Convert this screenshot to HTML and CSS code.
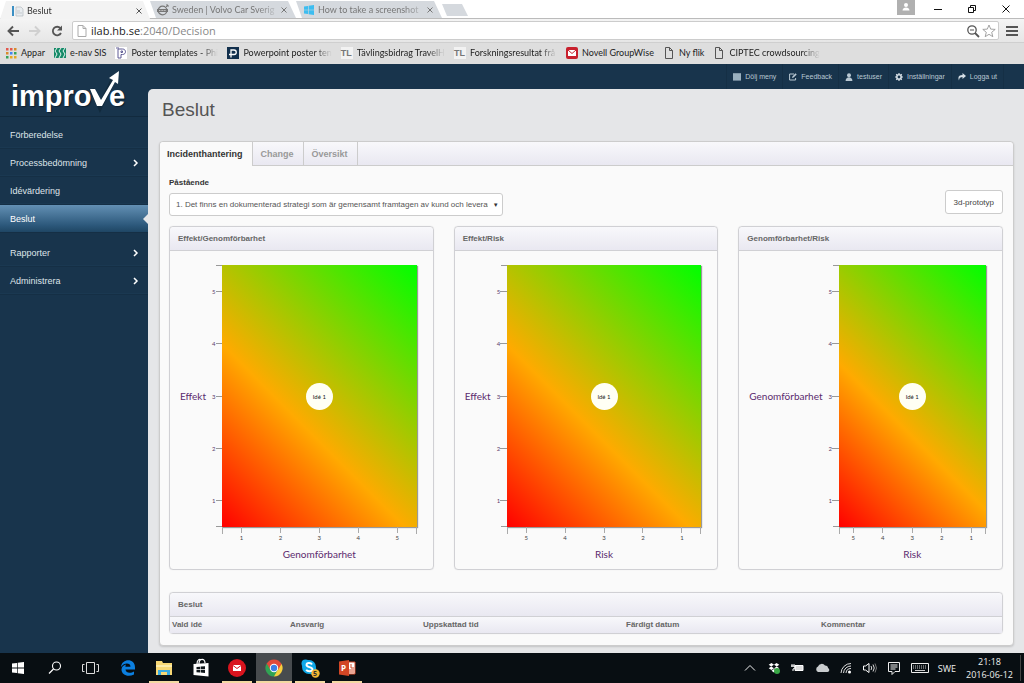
FILE: index.html
```html
<!DOCTYPE html>
<html lang="sv">
<head>
    <meta charset="UTF-8">
    <meta name="viewport" content="width=device-width, initial-scale=1.0">
    <title>Beslut</title>
    <link rel="stylesheet" href="styles.css">
</head>
<body>
    <!-- Browser tabs -->
    <div class="tab-strip">
        <div class="browser-tab active">
            <svg class="favicon" viewBox="0 0 12 12"><path d="M0 1h2v10H0z" fill="#3b8fc4"/><path d="M4 2h5l2 2v7H4z" fill="#e8ecef" stroke="#b5bcc2" stroke-width=".7"/><path d="M5 8h5M5 6h3" stroke="#b5bcc2" stroke-width=".7"/></svg>
            <span class="tab-title">Beslut</span>
            <button class="tab-close" aria-label="Stäng"><svg viewBox="0 0 6 6"><path d="M.5.5l5 5M5.500.5l-5 5" stroke="#555"/></svg></button>
        </div>
        <div class="browser-tab">
            <svg class="favicon" viewBox="0 0 12 12"><circle cx="5.500" cy="6.500" r="4.300" fill="none" stroke="#777" stroke-width="1.200"/><path d="M8.500 3.500L11 1M9 1h2v2" fill="none" stroke="#777"/><path d="M0 5h11v3H0z" fill="#777"/><path d="M2 6.500h7" stroke="#ddd" stroke-width=".8" stroke-dasharray="1 .6"/></svg>
            <span class="tab-title">Sweden | Volvo Car Sverig</span>
            <button class="tab-close" aria-label="Stäng"><svg viewBox="0 0 6 6"><path d="M.5.5l5 5M5.500.5l-5 5" stroke="#777"/></svg></button>
        </div>
        <div class="browser-tab">
            <svg class="favicon" viewBox="0 0 12 12"><path d="M1 2.500l4-.6v3.800H1zM5.600 1.800L11 1v4.700H5.600zM1 6.300h4v3.800l-4-.6zM5.600 6.300H11V11l-5.400-.8z" fill="#3dbdf0"/></svg>
            <span class="tab-title">How to take a screenshot</span>
            <button class="tab-close" aria-label="Stäng"><svg viewBox="0 0 6 6"><path d="M.5.5l5 5M5.500.5l-5 5" stroke="#777"/></svg></button>
        </div>
        <button class="new-tab" aria-label="Ny flik"></button>
        <div class="window-buttons">
            <span class="profile-badge"><svg viewBox="0 0 18 15"><circle cx="9" cy="5" r="2" fill="#fff"/><path d="M5.500 10.500c0-4 7-4 7 0z" fill="#fff"/></svg></span>
            <svg class="window-icon" viewBox="0 0 10 10"><path d="M1 5.500h8" stroke="#111"/></svg>
            <svg class="window-icon" viewBox="0 0 10 10"><path d="M1.500 3.500h5v5h-5zM3.500 3V1.500h5v5H7" fill="none" stroke="#111"/></svg>
            <svg class="window-icon" viewBox="0 0 10 10"><path d="M1.500 1.500l7 7M8.500 1.500l-7 7" stroke="#111"/></svg>
        </div>
    </div>

    <!-- Address bar -->
    <div class="toolbar">
        <svg class="tool-icon" viewBox="0 0 14 14"><path d="M13 7H3M7 2.500L2.500 7 7 11.500" fill="none" stroke="#555" stroke-width="1.900"/></svg>
        <svg class="tool-icon" viewBox="0 0 14 14"><path d="M1 7h10M7 2.500L11.500 7 7 11.500" fill="none" stroke="#d0d0d0" stroke-width="1.900"/></svg>
        <svg class="tool-icon" viewBox="0 0 14 14"><path d="M11 9a4.300 4.300 0 1 1-.6-4.800" fill="none" stroke="#555" stroke-width="1.800"/><path d="M12 1.500V6.500H7z" fill="#555"/></svg>
        <div class="address">
            <svg class="page-icon" viewBox="0 0 12 12"><path d="M2 .5h5l3 3v8H2zM7 .5v3h3" fill="none" stroke="#aaa"/></svg>
            <span class="url"><b>ilab.hb.se</b>:2040/Decision</span>
            <svg class="address-icon" viewBox="0 0 14 14"><circle cx="6" cy="6" r="4.200" fill="none" stroke="#555" stroke-width="1.300"/><path d="M4 6h4" stroke="#555"/><path d="M9 9l4 4" stroke="#555" stroke-width="1.800"/></svg>
            <svg class="address-icon" viewBox="0 0 14 14"><path d="M7 1l1.700 4.100 4.500.3-3.500 2.900 1.100 4.400L7 10.300l-3.800 2.400 1.100-4.400L.8 5.400l4.500-.3z" fill="none" stroke="#999" stroke-width=".9"/></svg>
        </div>
        <svg class="menu-icon" viewBox="0 0 12 12"><path d="M0 2h12M0 6h12M0 10h12" stroke="#555" stroke-width="2"/></svg>
    </div>

    <!-- Bookmarks -->
    <nav class="bookmarks">
        <a href="#"><svg viewBox="0 0 12 12"><path d="M1 1h2.500v2.500H1zM5 1h2.500v2.500H5z" fill="#e2574c"/><path d="M9 1h2.500v2.500H9zM1 5h2.500v2.500H1z" fill="#d98a2b"/><path d="M5 5h2.500v2.500H5z" fill="#4285f4"/><path d="M9 5h2.500v2.500H9zM1 9h2.500v2.500H1z" fill="#37a45a"/><path d="M5 9h2.500v2.500H5zM9 9h2.500v2.500H9z" fill="#e5a823"/></svg><span>Appar</span></a>
        <a href="#"><svg viewBox="0 0 12 12"><path d="M0 1h12v10H0z" fill="#168a68"/><path d="M3 1L1 4l2 3-2 4M7 1L5 4l2 3-2 4M11 1L9 4l2 3-2 4" fill="none" stroke="#fff" stroke-width=".9"/></svg><span>e-nav SIS</span></a>
        <a href="#"><svg viewBox="0 0 12 12"><path d="M0 0h12v12H0z" fill="#fff"/><path d="M3 11V2h4.500c4 0 4 5.500 0 5.500H6V11zM1 1h3M6 4h1.500v1.500H6z" fill="none" stroke="#5e5b94"/></svg><span class="long">Poster templates - Phi</span></a>
        <a href="#"><svg viewBox="0 0 12 12"><path d="M0 0h12v12H0z" fill="#12304d"/><path d="M4 10.500V3h3c3 0 3 4.500 0 4.500H2" fill="none" stroke="#fff" stroke-width="1.300"/></svg><span class="long">Powerpoint poster ten</span></a>
        <a href="#"><span class="tl-icon">TL</span><span class="long">Tävlingsbidrag TravelH</span></a>
        <a href="#"><span class="tl-icon">TL</span><span class="long">Forskningsresultat frå</span></a>
        <a href="#"><svg viewBox="0 0 12 12"><rect width="12" height="12" rx="2" fill="#c8202d"/><path d="M2 3h8v6H2z" fill="#fff"/><path d="M2 3l4 3.500L10 3" fill="none" stroke="#c8202d"/></svg><span>Novell GroupWise</span></a>
        <a href="#"><svg viewBox="0 0 12 12"><path d="M2.500.5h4l3 3v8h-7zM6.500.5v3h3" fill="none" stroke="#555"/></svg><span>Ny flik</span></a>
        <a href="#"><svg viewBox="0 0 12 12"><path d="M2.500.5h4l3 3v8h-7zM6.500.5v3h3" fill="none" stroke="#555"/></svg><span class="long">CIPTEC crowdsourcing</span></a>
    </nav>

    <div class="app">
        <!-- Left menu -->
        <aside class="sidebar">
            <div class="logo">
                <svg viewBox="0 0 122 48" role="img" aria-label="improve">
                    <path d="M82 20l8 18 13-27" fill="none" stroke="#0c1f2e" stroke-width="5" opacity=".5"/>
                    <text class="logo-text" x="1" y="37">impro</text>
                    <text class="logo-text" x="99" y="37">e</text>
                    <path d="M80 20h5l6 11 12-20-4-2 10-7-1 13-3-2-13 24h-5z" fill="#fff"/>
                </svg>
            </div>
            <ul class="menu">
                <li><a href="#">Förberedelse</a></li>
                <li><a href="#">Processbedömning <svg class="arrow" viewBox="0 0 6 8"><path d="M1 1l3 3-3 3" fill="none" stroke="#fff" stroke-width="1.500"/></svg></a></li>
                <li><a href="#">Idévärdering</a></li>
                <li class="selected"><a href="#">Beslut</a></li>
                <li><a href="#">Rapporter <svg class="arrow" viewBox="0 0 6 8"><path d="M1 1l3 3-3 3" fill="none" stroke="#fff" stroke-width="1.500"/></svg></a></li>
                <li><a href="#">Administrera <svg class="arrow" viewBox="0 0 6 8"><path d="M1 1l3 3-3 3" fill="none" stroke="#fff" stroke-width="1.500"/></svg></a></li>
            </ul>
        </aside>

        <div class="main">
            <!-- User menu -->
            <nav class="user-nav">
                <a href="#"><svg viewBox="0 0 8 8"><path d="M0 .5h8v6.500H0z" fill="#7f99ab"/><path d="M0 1h8M0 3h8M0 5h8M0 7h8" stroke="#b4c6d3" stroke-width="1"/></svg>Dölj meny</a>
                <a href="#"><svg viewBox="0 0 8 8"><path d="M5 1H.6v6h6V5" fill="none" stroke="#b9c8d3"/><path d="M3 5l.4-1.600L6.500.3l1.200 1.200-3.100 3.100z" fill="#b9c8d3"/></svg>Feedback</a>
                <a href="#"><svg viewBox="0 0 8 8"><circle cx="4" cy="2.200" r="2" fill="#b9c8d3"/><path d="M.6 8c0-5 6.800-5 6.800 0z" fill="#b9c8d3"/></svg>testuser</a>
                <a href="#"><svg viewBox="0 0 8 8"><circle cx="4" cy="4" r="2.200" fill="none" stroke="#d5dee5" stroke-width="1.600"/><path d="M4 0v1.500M4 6.500V8M0 4h1.500M6.500 4H8M1.200 1.200l1 1M5.800 5.800l1 1M1.200 6.800l1-1M5.800 2.200l1-1" stroke="#d5dee5" stroke-width="1.200"/></svg>Inställningar</a>
                <a href="#"><svg viewBox="0 0 8 8"><path d="M1 7.500C-.5 4 1 2 4.500 2V0L8 3 4.500 6V4C2.500 4 1 5 1 7.500z" fill="#d5dee5"/></svg>Logga ut</a>
            </nav>

            <main class="content">
                <h1>Beslut</h1>

                <div class="tab-box">
                    <div class="tabs">
                        <button class="tab current">Incidenthantering</button>
                        <button class="tab">Change</button>
                        <button class="tab">Översikt</button>
                    </div>

                    <div class="tab-body">
                        <div class="filter">
                            <div class="field">
                                <label for="claim">Påstående</label>
                                <div class="select-wrap">
                                    <select id="claim">
                                        <option>1. Det finns en dokumenterad strategi som är gemensamt framtagen av kund och leverantör</option>
                                    </select>
                                    <span class="select-arrow">▼</span>
                                </div>
                            </div>
                            <button class="button">3d-prototyp</button>
                        </div>

                        <!-- Charts -->
                        <div class="charts">
                            <section class="panel">
                                <h2>Effekt/Genomförbarhet</h2>
                                <div class="chart">
                                    <div class="y-label">Effekt</div>
                                    <div class="y-axis"><span>5</span><span>4</span><span>3</span><span>2</span><span>1</span></div>
                                    <div class="plot"><span class="idea">Idé 1</span></div>
                                    <div class="x-axis"><span>1</span><span>2</span><span>3</span><span>4</span><span>5</span></div>
                                    <div class="x-label">Genomförbarhet</div>
                                </div>
                            </section>
                            <section class="panel">
                                <h2>Effekt/Risk</h2>
                                <div class="chart">
                                    <div class="y-label">Effekt</div>
                                    <div class="y-axis"><span>5</span><span>4</span><span>3</span><span>2</span><span>1</span></div>
                                    <div class="plot"><span class="idea">Idé 1</span></div>
                                    <div class="x-axis"><span>5</span><span>4</span><span>3</span><span>2</span><span>1</span></div>
                                    <div class="x-label">Risk</div>
                                </div>
                            </section>
                            <section class="panel">
                                <h2>Genomförbarhet/Risk</h2>
                                <div class="chart">
                                    <div class="y-label">Genomförbarhet</div>
                                    <div class="y-axis"><span>5</span><span>4</span><span>3</span><span>2</span><span>1</span></div>
                                    <div class="plot"><span class="idea">Idé 1</span></div>
                                    <div class="x-axis"><span>5</span><span>4</span><span>3</span><span>2</span><span>1</span></div>
                                    <div class="x-label">Risk</div>
                                </div>
                            </section>
                        </div>

                        <!-- Decisions -->
                        <section class="panel decisions">
                            <h2>Beslut</h2>
                            <table>
                                <thead>
                                    <tr>
                                        <th class="col-idea">Vald idé</th>
                                        <th class="col-owner">Ansvarig</th>
                                        <th class="col-time">Uppskattad tid</th>
                                        <th class="col-date">Färdigt datum</th>
                                        <th>Kommentar</th>
                                    </tr>
                                </thead>
                            </table>
                        </section>
                    </div>
                </div>
            </main>
        </div>
    </div>

    <!-- Windows taskbar -->
    <footer class="taskbar">
        <div class="task-buttons">
            <button aria-label="Start"><svg viewBox="0 0 20 20"><path d="M4 5.600l5-.7v4.700H4zM9.700 4.800L16 4v5.600H9.700zM4 10.400h5v4.700l-5-.7zM9.700 10.400H16V16l-6.300-.8z" fill="#fff"/></svg></button>
            <button aria-label="Sök"><svg viewBox="0 0 20 20"><circle cx="11.500" cy="8" r="4" fill="none" stroke="#fff" stroke-width="1.100"/><path d="M8.500 11L4 15.500" stroke="#fff" stroke-width="1.200"/></svg></button>
            <button aria-label="Aktivitetsvy"><svg viewBox="0 0 20 20"><path d="M5.500 4.500h8v11h-8zM3.500 6.500h-2v7h2M15.500 6.500h2v7h-2" fill="none" stroke="#ddd"/></svg></button>
            <button aria-label="Edge"><svg viewBox="0 0 20 20"><path d="M3 9C4 0 17 0 17 9.500V11.500H7.500C7.800 15.500 13 15.500 16 13.500V16.500C10 19.500 3.500 17 3.500 11.500 3.500 9 5.500 7 8 6.500 7.500 7.500 7.400 8.500 7.400 8.800H12.500C12.500 4.500 6 4.500 3 9z" fill="#0b7fe0"/></svg></button>
            <button class="open" aria-label="Utforskaren"><svg viewBox="0 0 20 20"><path d="M2 3h6l1 2h9v12H2z" fill="#f7d774"/><path d="M2 7h16v2H2z" fill="#fceba9"/><path d="M4 17v-5h12v5h-3v-3H7v3z" fill="#38a9e0"/></svg></button>
            <button aria-label="Store"><svg viewBox="0 0 20 20"><path d="M2.500 6l15-1v13.500l-15-1.500z" fill="#fff"/><path d="M6 6c0-5 3-5 4-4M8 6c0-6 6-6 6-1" fill="none" stroke="#fff" stroke-width="1.200"/><path d="M5.500 9l3.500-.3v2.600H5.500zM9.600 8.600l4.400-.4v3.100H9.600zM5.500 12H9v2.500l-3.500-.3zM9.600 12H14v3l-4.400-.4z" fill="#10171b"/></svg></button>
            <button class="open" aria-label="GroupWise"><svg viewBox="0 0 20 20"><circle cx="10" cy="10" r="9" fill="#d9141e"/><path d="M6 7h8v6H6z" fill="#fff"/><path d="M6 7.500l4 3 4-3" fill="none" stroke="#d9141e"/></svg></button>
            <button class="open focused" aria-label="Chrome"><svg viewBox="0 0 20 20"><path d="M10 10L2.600 5.700A8.500 8.500 0 0 1 17.400 5.700z" fill="#e14a3b"/><path d="M10 10V18.500A8.500 8.500 0 0 1 2.600 5.700z" fill="#31a354"/><path d="M10 10l7.400-4.300A8.500 8.500 0 0 1 10 18.500z" fill="#f7cf3d"/><path d="M10 6h7.500L14 12zM6.500 12L2.700 5.500 10 6z" fill="#e14a3b"/><path d="M6.500 12l3.500 6.500 3.600-6.500z" fill="#31a354"/><circle cx="10" cy="10" r="4.200" fill="#fff"/><circle cx="10" cy="10" r="3.200" fill="#3d7fe6"/></svg></button>
            <button class="open" aria-label="Skype"><svg viewBox="0 0 20 20"><circle cx="9" cy="9" r="7" fill="#0fa8e8"/><circle cx="5.500" cy="5.500" r="4" fill="#0fa8e8"/><circle cx="12.500" cy="12.500" r="4" fill="#0fa8e8"/><path d="M12 6.500C11 4.500 6.500 4.500 6.500 7s6 1.600 6 4.200-5 2.800-6.300.5" fill="none" stroke="#fff" stroke-width="1.900"/><circle cx="15.500" cy="15.500" r="4.200" fill="#f4b731"/><text class="badge-text" x="15" y="18">5</text></svg></button>
            <button class="open" aria-label="PowerPoint"><svg viewBox="0 0 20 20"><path d="M10 4h8v12h-8z" fill="#fff"/><path d="M10 4h8v12h-8" fill="none" stroke="#d24625"/><path d="M12 12h5M12 14h5M14 6v4h3" stroke="#d24625" fill="none"/><path d="M2 3.500L12 2v16L2 16.500z" fill="#d24625"/><text class="ppt-text" x="4" y="13">P</text></svg></button>
        </div>
        <div class="tray">
            <svg viewBox="0 0 16 16"><path d="M3 10.500l5-5 5 5" fill="none" stroke="#eee"/></svg>
            <svg viewBox="0 0 16 16"><path d="M5.500 3L8 4.700 5.200 6.500 2.700 4.800zM10.500 3l2.800 1.800-2.500 1.700L8 4.700zM2.700 8.200l2.500-1.700L8 8.300 5.500 10zM8 8.300l2.800-1.800 2.500 1.700L10.500 10zM5.500 10.700L8 9.100l2.500 1.600L8 12.500z" fill="#fff"/><circle cx="11" cy="11" r="3" fill="#39a846"/></svg>
            <svg viewBox="0 0 16 16"><path d="M5 5.500h8v5H5z" fill="#ddd" stroke="#fff"/><path d="M2 4v3M4 4v3M1 6h4v2L3 9v2" stroke="#fff" fill="none"/></svg>
            <svg viewBox="0 0 16 16"><path d="M4 12a3 3 0 0 1 0-5.500 4 4 0 0 1 7-1c2 0 3 1 3 2.500 2 1 1.500 4-.5 4z" fill="#c9ccce"/></svg>
            <svg viewBox="0 0 16 16"><path d="M3 13A10 10 0 0 1 13 3.500M5.500 13A7.500 7.500 0 0 1 13 6M8 13a5 5 0 0 1 5-4.500" fill="none" stroke="#ddd"/><circle cx="11.500" cy="12" r="1.500" fill="#fff"/></svg>
            <svg viewBox="0 0 16 16"><path d="M1.500 6h2L7 3.500v9L3.500 10h-2z" fill="none" stroke="#fff"/><path d="M9 6q1.500 2 0 4M11 4.500q2.500 3.500 0 7" fill="none" stroke="#ddd"/><path d="M13 3.500q3 4.500 0 9" fill="none" stroke="#777"/></svg>
            <svg viewBox="0 0 16 16"><path d="M2.500 2.500h11v9H9l-3 3v-3H2.500zM4.500 5h7M4.500 7h7M4.500 9h5" fill="none" stroke="#eee"/></svg>
            <svg class="tray-keyboard" viewBox="0 0 20 16"><path d="M1.500 3.500h17v9h-17z" fill="none" stroke="#eee"/><path d="M3 6h14M3 8h14" stroke="#ccc" stroke-dasharray="1 1"/><path d="M5 10.500h10" stroke="#ccc"/></svg>
            <span class="language">SWE</span>
            <div class="clock">
                <div>21:18</div>
                <div>2016-06-12</div>
            </div>
        </div>
    </footer>
</body>
</html>
```
FILE: styles.css
```css
* {
    box-sizing: border-box;
}

body {
    margin: 0;
    min-height: 100vh;
    display: flex;
    flex-direction: column;
    font-family: "Liberation Sans", Arial, sans-serif;
    font-size: 9px;
    color: #555;
    background-color: #18344c;
}

button {
    font-family: inherit;
    border: none;
    background: none;
    padding: 0;
}

a {
    color: inherit;
    text-decoration: none;
}

svg {
    display: block;
    flex: none;
}

/* Browser tabs */
.tab-strip {
    display: flex;
    height: 19px;
    background-color: #fff;
    border-bottom: 1px solid #bbb;
    font-family: Lato, sans-serif;
    font-size: 9px;
    color: #777;
}

.browser-tab {
    display: flex;
    align-items: center;
    width: 146px;
    height: 18px;
    padding: 2px 8px 0 7px;
    background-color: #d5d9de;
    clip-path: polygon(0 1px, 138px 1px, 146px 18px, 6px 18px);
}

.browser-tab.active {
    width: 150px;
    height: 19px;
    padding: 2px 7px 0 12px;
    color: #333;
    background-color: #f3f3f3;
    clip-path: polygon(6px 1px, 143px 1px, 150px 19px, 0 19px);
}

.favicon {
    width: 12px;
    height: 12px;
    margin-right: 3px;
}

.tab-title {
    flex: 1;
    white-space: nowrap;
    line-height: 14px;
    mask-image: linear-gradient(to right, #000 80%, transparent);
}

.tab-close svg {
    width: 6px;
    height: 6px;
    margin: 0 1px;
}

.new-tab {
    width: 26px;
    height: 12px;
    margin-top: 4px;
    background-color: #d5d9de;
    clip-path: polygon(0 0, 20px 0, 26px 12px, 5px 12px);
}

.window-buttons {
    display: flex;
    align-items: center;
    gap: 24px;
    margin-left: auto;
    padding-right: 13px;
}

.profile-badge {
    align-self: flex-start;
    width: 18px;
    height: 15px;
    margin-right: -6px;
    background-color: #b0b0b0;
}

.window-icon {
    width: 10px;
    height: 10px;
}

/* Address bar */
.toolbar {
    display: flex;
    align-items: center;
    height: 23px;
    padding: 0 6px;
    background: linear-gradient(#f4f4f4, #e6e6e6);
}

.tool-icon {
    width: 14px;
    height: 14px;
    margin-right: 8px;
}

.address {
    display: flex;
    flex: 1;
    align-items: center;
    height: 19px;
    padding: 0 2px 0 3px;
    background-color: #fff;
    border: 1px solid #ccc;
    border-radius: 2px;
}

.page-icon {
    width: 12px;
    height: 12px;
    margin-right: 3px;
}

.url {
    flex: 1;
    font-family: "Open Sans", sans-serif;
    font-size: 11px;
    line-height: 16px;
    color: #888;
}

.url b {
    font-weight: normal;
    color: #222;
}

.address-icon {
    width: 14px;
    height: 14px;
    margin-left: 2px;
}

.menu-icon {
    width: 12px;
    height: 12px;
    margin-left: 7px;
}

/* Bookmarks */
.bookmarks {
    display: flex;
    align-items: center;
    gap: 9px;
    height: 22px;
    padding: 0 5px 2px;
    background-color: #dedede;
    border-top: 1px solid #cfcfcf;
    font-family: Lato, sans-serif;
    font-size: 9px;
    line-height: 14px;
    color: #222;
}

.bookmarks a {
    display: flex;
    align-items: center;
    gap: 4px;
    white-space: nowrap;
}

.bookmarks svg {
    width: 12px;
    height: 12px;
}

.bookmarks .long {
    min-width: 87px;
    mask-image: linear-gradient(to right, #000 80%, transparent);
}

.tl-icon {
    width: 12px;
    background-color: #f2f2f2;
    color: #777;
    font-family: "Liberation Sans", sans-serif;
    font-weight: bold;
    font-size: 9px;
    line-height: 12px;
}

/* Application */
.app {
    display: flex;
    flex: 1;
    background-color: #18344c;
}

.sidebar {
    flex: none;
    width: 148px;
}

.logo {
    height: 53px;
    padding: 5px 0 0 10px;
    border-bottom: 1px solid #122a3e;
}

.logo svg {
    width: 122px;
    height: 48px;
}

.logo-text {
    font-family: "Liberation Sans", Arial, sans-serif;
    font-weight: bold;
    font-size: 29px;
    fill: #fff;
    text-shadow: 1px 1px 1px #0c1f2e;
}

.menu {
    list-style: none;
    margin: 0;
    padding: 4px 0 0;
}

.menu a {
    display: flex;
    align-items: center;
    justify-content: space-between;
    height: 28px;
    padding: 0 10px;
    color: #dfe5ea;
    border-bottom: 1px solid #152f45;
    box-shadow: inset 0 -1px #1a3851;
}

.menu .selected {
    position: relative;
    margin-bottom: 6px;
}

.menu .selected a {
    color: #fff;
    background: linear-gradient(#6390b4, #2c587b 75%, #1f4664);
    box-shadow: none;
}

/* notch that points at the content */
.menu .selected::after {
    content: "";
    position: absolute;
    right: 0;
    top: 9px;
    border: 5px solid transparent;
    border-left: none;
    border-right-color: #e5e6e8;
}

.arrow {
    width: 6px;
    height: 8px;
    margin-right: -1px;
}

.main {
    display: flex;
    flex: 1;
    flex-direction: column;
    min-width: 0;
}

.user-nav {
    display: flex;
    justify-content: flex-end;
    height: 25px;
    padding-right: 20px;
    font-size: 7px;
    color: #b9c8d3;
}

.user-nav a {
    display: flex;
    align-items: center;
    gap: 4px;
    padding: 0 6px;
    border-left: 1px solid #152f45;
}

.user-nav a:last-child {
    border-right: 1px solid #152f45;
}

.user-nav svg {
    width: 8px;
    height: 8px;
}

.content {
    flex: 1;
    padding: 9px 10px 7px 11px;
    background-color: #e5e6e8;
    border-top-left-radius: 5px;
}

h1 {
    margin: 0 0 19px 3px;
    font-size: 19px;
    line-height: 24px;
    font-weight: normal;
    color: #555;
}

.tab-box {
    background-color: #fafafa;
    border: 1px solid #ccc;
    border-radius: 4px;
    box-shadow: 0 1px 2px rgba(0, 0, 0, 0.15);
}

.tabs {
    display: flex;
    height: 24px;
    background: linear-gradient(#f8f8fb, #e9e8f1);
    border-bottom: 1px solid #ccc;
    border-radius: 4px 4px 0 0;
}

.tab {
    height: 24px;
    padding: 0 9px 0 8px;
    font-size: 9px;
    font-weight: bold;
    color: #999;
    border-right: 1px solid #ccc;
}

.tab.current {
    padding-left: 7px;
    color: #333;
    background-color: #fafafa;
    border-top-left-radius: 4px;
}

.tab-body {
    padding: 11px 10px 11px 9px;
}

.filter {
    display: flex;
    align-items: flex-end;
    justify-content: space-between;
    margin-bottom: 10px;
}

.field {
    width: 40%;
}

.field label {
    display: block;
    margin-bottom: 4px;
    font-size: 8px;
    line-height: 12px;
    font-weight: bold;
    color: #333;
}

.select-wrap {
    position: relative;
}

.select-wrap select {
    appearance: none;
    display: block;
    width: 100%;
    height: 23px;
    padding: 0 14px 0 6px;
    font-family: inherit;
    font-size: 8px;
    color: #555;
    background-color: #fff;
    border: 1px solid #ccc;
    border-radius: 3px;
}

.select-arrow {
    position: absolute;
    right: 4px;
    top: 8px;
    font-size: 6px;
    line-height: 8px;
    color: #333;
    pointer-events: none;
}

.button {
    height: 24px;
    margin-bottom: 2px;
    padding: 0 8px;
    font-size: 8px;
    color: #444;
    background-color: #fff;
    border: 1px solid #ccc;
    border-radius: 3px;
}

/* Panels */
.panel {
    border: 1px solid #d0d0d4;
    border-radius: 4px;
    box-shadow: 0 0 1px rgba(0, 0, 0, 0.15);
}

.panel h2 {
    margin: 0;
    height: 24px;
    padding: 0 8px;
    font-size: 8px;
    line-height: 24px;
    color: #666;
    background: linear-gradient(#f8f8fb, #e9e8f1);
    border-bottom: 1px solid #d0d0d4;
    border-radius: 4px 4px 0 0;
}

.charts {
    display: grid;
    grid-template-columns: repeat(3, 1fr);
    gap: 20px;
}

.chart {
    display: grid;
    grid-template-columns: auto 16px 1fr;
    padding: 14px 16px 8px 10px;
    font-family: Lato, sans-serif;
}

.y-label,
.x-label {
    font-size: 10px;
    line-height: 14px;
    color: #5b2a6e;
}

.y-label {
    align-self: center;
}

.x-label {
    grid-column: 3;
    text-align: center;
}

.y-axis {
    display: flex;
    flex-direction: column;
    margin-left: 10px;
    background: linear-gradient(#999, #999) top / 100% 1px no-repeat,
                linear-gradient(#999, #999) bottom / 100% 1px no-repeat;
}

.y-axis span {
    display: flex;
    flex: 1;
    align-items: center;
    margin-left: -4px;
    font-size: 6px;
    color: #5b3a6a;
}

/* tick marks */
.y-axis span::after {
    content: "";
    flex: 1;
    height: 1px;
    background-color: #999;
}

.plot {
    display: flex;
    align-items: center;
    justify-content: center;
    height: 262px;
    background: linear-gradient(45deg, #f00, #fa0 40%, #0f0);
    box-shadow: 1px 1px 1px #999;
}

.idea {
    width: 27px;
    height: 27px;
    border-radius: 50%;
    background-color: #fffff4;
    font-size: 6px;
    line-height: 27px;
    text-align: center;
    color: #222;
}

.x-axis {
    grid-column: 3;
    display: flex;
    height: 20px;
    background: linear-gradient(#aaa, #aaa) left top / 1px 7px no-repeat,
                linear-gradient(#aaa, #aaa) right top / 1px 7px no-repeat;
}

.x-axis span {
    flex: 1;
    padding-top: 6px;
    font-size: 6px;
    line-height: 9px;
    text-align: center;
    color: #444;
    background: linear-gradient(#aaa, #aaa) center top / 1px 6px no-repeat;
}

/* Decisions */
.decisions {
    margin-top: 22px;
}

.decisions table {
    width: 100%;
    table-layout: fixed;
    border-collapse: collapse;
    background: linear-gradient(#f8f8fb, #e9e8f1);
}

.decisions th {
    padding: 0 2px;
    font-size: 8px;
    line-height: 16px;
    text-align: left;
    color: #666;
}

.col-idea {
    width: 118px;
}

.col-owner {
    width: 133px;
}

.col-time {
    width: 203px;
}

.col-date {
    width: 195px;
}

/* Taskbar */
.taskbar {
    display: flex;
    justify-content: space-between;
    height: 30px;
    background-color: #080e12;
    color: #eee;
    font-family: "Open Sans", sans-serif;
}

.task-buttons {
    display: flex;
    width: 365px;
}

.task-buttons button {
    display: flex;
    flex: 1;
    align-items: center;
    justify-content: center;
}

.task-buttons svg {
    width: 20px;
    height: 20px;
}

.task-buttons .open {
    background: linear-gradient(#f3d9a2, #f3d9a2) bottom / 30px 2px no-repeat;
}

.task-buttons .focused {
    background: linear-gradient(#f3d9a2, #f3d9a2) bottom / 100% 2px no-repeat #474b4e;
}

.badge-text {
    font-size: 7px;
    font-weight: bold;
    text-anchor: middle;
    fill: #333;
}

.ppt-text {
    font-size: 8px;
    font-weight: bold;
    fill: #fff;
}

.tray {
    display: flex;
    align-items: center;
    gap: 8px;
    padding-right: 3px;
}

.tray svg {
    width: 16px;
    height: 16px;
}

.tray .tray-keyboard {
    width: 20px;
}

.language {
    margin-right: 2px;
    font-size: 9px;
}

.clock {
    padding-right: 7px;
    border-right: 1px solid #444;
    font-size: 9px;
    line-height: 13px;
    text-align: center;
}
```
